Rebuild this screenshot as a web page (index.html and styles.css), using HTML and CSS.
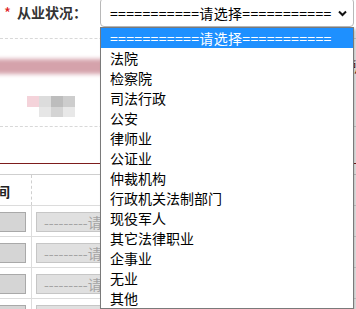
FILE: index.html
```html
<!DOCTYPE html>
<html lang="zh-CN">
<head>
    <meta charset="UTF-8">
    <meta name="viewport" content="width=device-width, initial-scale=1.0">
    <title>从业状况</title>
    <link rel="stylesheet" href="styles.css">
</head>
<body>
    <div class="page">
        <div class="field-row">
            <span class="req">*</span>
            <span class="label">从业状况：</span>
            <div class="select">
                <span class="eq-text">===========请选择===========</span>
                <svg class="chevron" width="9" height="7" viewBox="0 0 9 7">
                    <path d="M1 1.5 L4.5 5 L8 1.5" fill="none" stroke="#111" stroke-width="2"/>
                </svg>
            </div>
        </div>

        <div class="masked-row">
            <div class="blur-bar"></div>
            <span class="edge-mark">所</span>
            <div class="mosaic">
                <span class="m1"></span><span class="m2"></span><span class="m3"></span><span class="m4"></span>
                <span class="m0"></span><span class="m5"></span><span class="m6"></span><span class="m7"></span>
            </div>
        </div>

        <div class="section-line"></div>

        <div class="grid-table">
            <div class="trow thead">
                <div class="cell first dashed"><span class="head-text">时间</span></div>
                <div class="cell"></div>
            </div>
            <div class="trow">
                <div class="cell first"><span class="box-in"></span></div>
                <div class="cell"><span class="box-sel">---------请选择---------</span></div>
            </div>
            <div class="trow">
                <div class="cell first"><span class="box-in"></span></div>
                <div class="cell"><span class="box-sel">---------请选择---------</span></div>
            </div>
            <div class="trow">
                <div class="cell first"><span class="box-in"></span></div>
                <div class="cell"><span class="box-sel">---------请选择---------</span></div>
            </div>
            <div class="trow">
                <div class="cell first"><span class="box-in"></span></div>
                <div class="cell"><span class="box-sel">---------请选择---------</span></div>
            </div>
        </div>

        <ul class="dropdown">
            <li class="active"><span class="eq-text">===========请选择===========</span></li>
            <li>法院</li>
            <li>检察院</li>
            <li>司法行政</li>
            <li>公安</li>
            <li>律师业</li>
            <li>公证业</li>
            <li>仲裁机构</li>
            <li>行政机关法制部门</li>
            <li>现役军人</li>
            <li>其它法律职业</li>
            <li>企事业</li>
            <li>无业</li>
            <li>其他</li>
        </ul>
    </div>
</body>
</html>
```

FILE: styles.css
```css
* {
    box-sizing: border-box;
}

body {
    margin: 0;
    background: #fff;
    font-family: "Microsoft YaHei", "Noto Sans CJK SC", sans-serif;
    font-size: 14px;
    color: #333;
}

.page {
    position: relative;
    width: 356px;
    height: 309px;
    overflow: hidden;
}

.field-row {
    display: flex;
    align-items: flex-start;
    height: 41px;
    margin-top: -2px;
    border-bottom: 1px dashed #d8d8d8;
}

.req {
    color: #e02020;
    font-size: 15px;
    line-height: 20px;
    margin: 5px 0 0 4px;
    width: 13px;
}

.label {
    width: 83px;
    line-height: 20px;
    margin-top: 4px;
    font-weight: bold;
    color: #333;
}

.select {
    display: flex;
    align-items: center;
    justify-content: space-between;
    width: 254px;
    height: 29px;
    padding: 1px 6px 0 9px;
    border: 1px solid #b8b8b8;
    border-radius: 4px;
    color: #000;
}

.eq-text {
    letter-spacing: 0.35px;
}

.masked-row {
    position: relative;
    height: 88px;
    border-bottom: 1px dashed #d8d8d8;
}

.blur-bar {
    position: absolute;
    left: -10px;
    top: 20px;
    width: 130px;
    height: 15px;
    background: #d5a2ab;
    filter: blur(2px);
}

.edge-mark {
    position: absolute;
    left: 349px;
    top: 17px;
    color: #6b1a10;
    font-size: 14px;
}

.mosaic {
    position: absolute;
    left: 27px;
    top: 57px;
    display: grid;
    grid-template-columns: repeat(4, 12px);
    grid-template-rows: 11px 10px;
    filter: blur(0.6px);
}

.m1 { background: #f4d3da; }
.m2 { background: #dcdcdc; }
.m3 { background: #bdbdbd; }
.m4 { background: #cdcdcd; }
.m0 { background: #fff; }
.m5 { background: #e6e6e6; }
.m6 { background: #d4d4d4; }
.m7 { background: #e8e8e8; }

.section-line {
    height: 1px;
    margin-top: 36px;
    background: #7d1d1d;
}

.grid-table {
    margin-top: 10px;
    border-top: 1px solid #cfcfcf;
}

.trow {
    display: grid;
    grid-template-columns: 32px 1fr;
    height: 31px;
    border-bottom: 1px solid #dcdcdc;
}

.cell {
    overflow: hidden;
    white-space: nowrap;
}

.cell.first {
    border-right: 1px solid #dcdcdc;
}

.cell.dashed {
    border-right: 1px dashed #cfcfcf;
}

.head-text {
    display: inline-block;
    margin: 6px 0 0 -18px;
    font-weight: bold;
    color: #222;
}

.box-in {
    display: block;
    width: 28px;
    height: 20px;
    margin: 6px 0 0 -2px;
    background: #d5d5d5;
    border: 1px solid #a9a9a9;
}

.box-sel {
    display: block;
    width: 160px;
    height: 20px;
    margin: 6px 0 0 4px;
    padding-left: 7px;
    line-height: 18px;
    background: #e0e0e0;
    border: 1px solid #c6c6c6;
    color: #a4a4a4;
}

.dropdown {
    position: absolute;
    left: 100px;
    top: 27px;
    width: 254px;
    margin: 0;
    padding: 0;
    list-style: none;
    background: #fff;
    border: 1px solid #7a7a7a;
    box-shadow: 2px 2px 3px rgba(0, 0, 0, 0.25);
    color: #000;
}

.dropdown li {
    height: 20px;
    line-height: 20px;
    padding-left: 9px;
    white-space: nowrap;
}

.dropdown li.active {
    background: #1e90ff;
    color: #fff;
}
```
